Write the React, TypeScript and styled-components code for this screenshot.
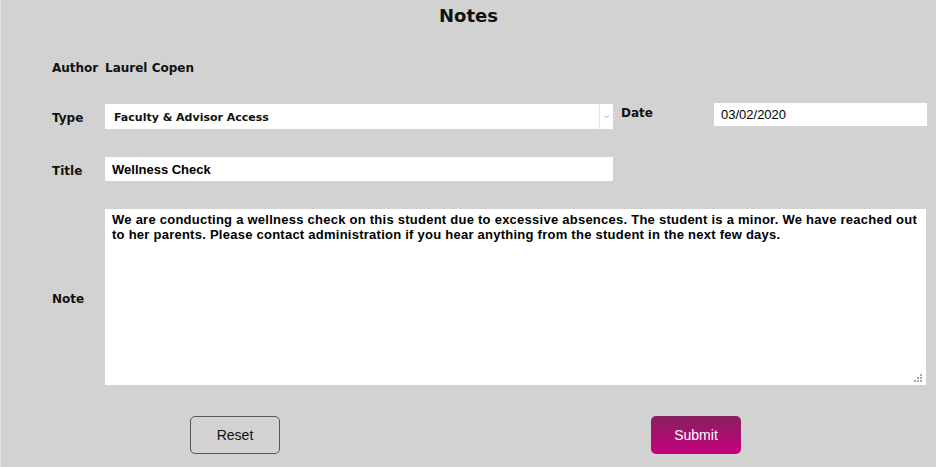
import styled, { createGlobalStyle } from 'styled-components'

const GlobalStyle = createGlobalStyle`
  html, body {
    margin: 0;
    padding: 0;
    background: #d2d2d2;
  }
  * {
    box-sizing: border-box;
  }
`

const Page = styled.div`
  width: 936px;
  height: 467px;
  background: #d2d2d2;
  border-left: 1px solid #e2e2e2;
  font-family: 'DejaVu Sans', sans-serif;
  color: #111;
`

const Header = styled.h1`
  margin: 0;
  height: 32px;
  line-height: 32px;
  text-align: center;
  font-size: 18px;
  font-weight: 700;
`

const Form = styled.div`
  padding-left: 51px;
  display: flex;
  flex-direction: column;
`

const Row = styled.div<{ $top: number; $center?: boolean }>`
  display: flex;
  align-items: ${(props) => (props.$center ? 'center' : 'flex-start')};
  margin-top: ${(props) => props.$top}px;
`

const Label = styled.div<{ $h?: number; $offset?: number }>`
  width: 53px;
  flex-shrink: 0;
  font-size: 12px;
  font-weight: 700;
  height: ${(props) => props.$h || 20}px;
  line-height: ${(props) => props.$h || 20}px;
  margin-top: ${(props) => props.$offset || 0}px;
  padding-top: 2px;
  white-space: nowrap;
`

const AuthorName = styled.div`
  height: 20px;
  font-size: 12px;
  font-weight: 700;
  line-height: 20px;
  padding-top: 2px;
`

const Select = styled.div`
  width: 508px;
  height: 25px;
  margin-top: 1px;
  background: #fff;
  display: flex;
  align-items: center;
`

const SelectValue = styled.div`
  flex: 1;
  padding: 1px 0 0 9px;
  font-size: 11px;
  font-weight: 700;
`

const SelectArrow = styled.div`
  width: 14px;
  height: 100%;
  border-left: 1px solid #e6e6e6;
  display: flex;
  align-items: center;
  justify-content: center;
`

const DateLabel = styled.div`
  width: 93px;
  margin-left: 8px;
  margin-top: 2px;
  font-size: 12px;
  font-weight: 700;
  line-height: 16px;
`

const TextInput = styled.input<{ $w: number; $h: number; $bold?: boolean }>`
  width: ${(props) => props.$w}px;
  height: ${(props) => props.$h}px;
  border: none;
  outline: none;
  background: #fff;
  padding: 0 7px;
  font-family: 'Liberation Sans', Arial, sans-serif;
  font-size: 13px;
  font-weight: ${(props) => (props.$bold ? 700 : 400)};
  color: #000;
`

const NoteWrap = styled.div`
  position: relative;
  width: 821px;
  height: 176px;
  background: #fff;
`

const NoteArea = styled.textarea`
  display: block;
  width: 100%;
  height: 100%;
  border: none;
  outline: none;
  resize: none;
  background: #fff;
  padding: 3px 7px;
  font-family: 'Liberation Sans', Arial, sans-serif;
  font-size: 13px;
  font-weight: 700;
  line-height: 15px;
  letter-spacing: 0.25px;
  color: #000;
`

const Grip = styled.svg`
  position: absolute;
  right: 3px;
  bottom: 2px;
`

const ButtonRow = styled.div`
  display: flex;
  gap: 371px;
  margin-top: 31px;
  padding-left: 189px;
`

const Button = styled.button<{ $primary?: boolean }>`
  width: 90px;
  height: 38px;
  border-radius: 5px;
  font-family: 'Liberation Sans', Arial, sans-serif;
  font-size: 14px;
  cursor: pointer;
  color: ${(props) => (props.$primary ? '#fff' : '#111')};
  border: ${(props) => (props.$primary ? 'none' : '1px solid #555')};
  background: ${(props) =>
    props.$primary ? 'linear-gradient(180deg, #88205f 0%, #c5007d 100%)' : 'transparent'};
`

const App = () => {
  return (
    <Page>
      <GlobalStyle />
      <Header>Notes</Header>
      <Form>
        <Row $top={24} $center>
          <Label>Author</Label>
          <AuthorName>Laurel Copen</AuthorName>
        </Row>
        <Row $top={27}>
          <Label $h={25} $offset={1}>Type</Label>
          <Select>
            <SelectValue>Faculty &amp; Advisor Access</SelectValue>
            <SelectArrow>
              <svg width="7" height="5" viewBox="0 0 7 5">
                <path d="M1 1.5 L3.5 3.5 L6 1.5" fill="none" stroke="#b5b5b5" strokeWidth="1" />
              </svg>
            </SelectArrow>
          </Select>
          <DateLabel>Date</DateLabel>
          <TextInput $w={213} $h={23} defaultValue="03/02/2020" />
        </Row>
        <Row $top={28}>
          <Label $h={24}>Title</Label>
          <TextInput $w={508} $h={24} $bold defaultValue="Wellness Check" />
        </Row>
        <Row $top={28} $center>
          <Label>Note</Label>
          <NoteWrap>
            <NoteArea defaultValue="We are conducting a wellness check on this student due to excessive absences. The student is a minor. We have reached out to her parents. Please contact administration if you hear anything from the student in the next few days." />
            <Grip width="9" height="9" viewBox="0 0 9 9">
              <g fill="#a8a8a8">
                <rect x="6" y="0" width="2" height="2" />
                <rect x="3" y="3" width="2" height="2" />
                <rect x="6" y="3" width="2" height="2" />
                <rect x="0" y="6" width="2" height="2" />
                <rect x="3" y="6" width="2" height="2" />
                <rect x="6" y="6" width="2" height="2" />
              </g>
            </Grip>
          </NoteWrap>
        </Row>
      </Form>
      <ButtonRow>
        <Button>Reset</Button>
        <Button $primary>Submit</Button>
      </ButtonRow>
    </Page>
  )
}

export default App
